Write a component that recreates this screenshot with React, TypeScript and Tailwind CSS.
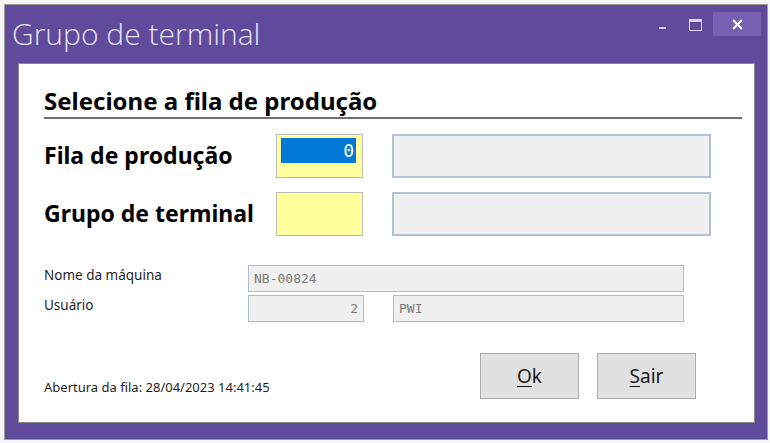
import { X } from "lucide-react"

const sans = "font-['Segoe_UI','Noto_Sans',sans-serif]"
const mono = "font-['DejaVu_Sans_Mono',monospace]"

function ReadOnlyField({ value, align = "left", className = "" }: { value?: string; align?: "left" | "right"; className?: string }) {
  return (
    <div
      className={`h-[27px] border border-[#aebccd] bg-[#f0f0f0] px-[5px] flex items-center text-[13px] text-[#7a7a7a] ${mono} ${
        align === "right" ? "justify-end" : "justify-start"
      } ${className}`}
    >
      {value}
    </div>
  )
}

function BigRow({ label, selected }: { label: string; selected?: boolean }) {
  return (
    <div className="flex items-center h-[44px]">
      <div className="w-[232px] text-[23px] font-bold text-black leading-none pb-[2px]">{label}</div>
      <div className="w-[87px] h-[44px] border border-[#bdbdbd] bg-[#ffff9e] pl-[4px] pr-[6px] pt-[3px]">
        {selected && (
          <div className={`h-[25px] bg-[#0078d7] text-white text-[18px] flex items-center justify-end pr-[2px] ${mono}`}>0</div>
        )}
      </div>
      <div className="ml-[29px] w-[319px] h-[44px] border-2 border-[#b4c2d3] bg-[#f0f0f0]" />
    </div>
  )
}

function Button({ label }: { label: string }) {
  return (
    <button className="w-[99px] h-[46px] border border-[#adadad] bg-[#e1e1e1] text-[19px] text-[#1a1a1a]">
      <span className="underline underline-offset-[3px] decoration-1">{label[0]}</span>
      {label.slice(1)}
    </button>
  )
}

export default function App() {
  return (
    <div className={`w-[770px] h-[443px] bg-[#f6f6f6] pl-[4px] pt-[4px] ${sans}`}>
      <div className="w-[764px] h-[436px] border border-[#9b9b9b] bg-[#604a9c] flex flex-col">
        <div className="h-[58px] flex justify-between">
          <div className="pl-[7px] pt-[14px] text-[30px] font-light text-[#e6e1f3] leading-none font-['Open_Sans',sans-serif]">
            Grupo de terminal
          </div>
          <div className="flex items-start pt-[7px] pr-[6px]">
            <div className="w-[7px] h-[2px] bg-[#d8d2ea] mt-[15px] mr-[23px]" />
            <div className="w-[13px] h-[12px] border border-[#d8d2ea] border-t-[3px] mt-[7px] mr-[11px]" />
            <div className="w-[48px] h-[24px] bg-[#7560b2] flex items-center justify-center">
              <X size={15} strokeWidth={3.5} className="text-white" />
            </div>
          </div>
        </div>
        <div className="pl-[13px]">
          <div className="w-[737px] h-[360px] bg-white border border-[#8a8a8a] pl-[25px] pr-[12px] pt-[22px] flex flex-col">
            <div className="text-[24px] font-bold text-black leading-[30px]">Selecione a fila de produção</div>
            <div className="h-[2px] bg-[#6e6e6e] mt-[1px]" />
            <div className="mt-[15px] flex flex-col gap-[14px]">
              <BigRow label="Fila de produção" selected />
              <BigRow label="Grupo de terminal" />
            </div>
            <div className="mt-[29px] flex flex-col gap-[3px] text-[13.5px] text-[#1e1e1e]">
              <div className="flex items-start">
                <div className="w-[204px]">Nome da máquina</div>
                <ReadOnlyField value="NB-00824" className="w-[436px]" />
              </div>
              <div className="flex items-start">
                <div className="w-[204px]">Usuário</div>
                <ReadOnlyField value="2" align="right" className="w-[116px]" />
                <ReadOnlyField value="PWI" className="ml-[29px] w-[291px]" />
              </div>
            </div>
            <div className="mt-[31px] flex items-end">
              <div className="flex-1 text-[13px] text-[#1e1e1e] pb-[2px]">Abertura da fila: 28/04/2023 14:41:45</div>
              <div className="flex gap-[18px] mr-[46px]">
                <Button label="Ok" />
                <Button label="Sair" />
              </div>
            </div>
          </div>
        </div>
      </div>
    </div>
  )
}
